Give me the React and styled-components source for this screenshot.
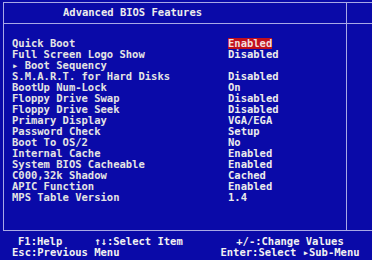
import React from 'react';
import styled, { createGlobalStyle } from 'styled-components';

const GlobalStyle = createGlobalStyle`
  html, body {
    margin: 0;
    padding: 0;
    background: #0a0aa8;
    width: 372px;
    height: 260px;
    overflow: hidden;
  }
`;

const LINE = '#a9a9e6';

const Screen = styled.div`
  width: 372px;
  height: 260px;
  background: #0a0aa8;
  color: #e6e6e6;
  font-family: "DejaVu Sans Mono", "Liberation Mono", monospace;
  font-weight: bold;
  font-size: 10.5px;
  padding-top: 2px;
  box-sizing: border-box;
  overflow: hidden;
`;

const Frame = styled.div`
  margin-left: 3px;
  border-top: 1px solid ${LINE};
  border-left: 1px solid ${LINE};
  border-bottom: 1px solid ${LINE};
  display: grid;
  grid-template-columns: 342px 1fr;
  height: 229px;
  box-sizing: border-box;
`;

const Main = styled.div`
  display: flex;
  flex-direction: column;
`;

const Side = styled.div`
  border-left: 1px solid ${LINE};
  display: flex;
  flex-direction: column;
  min-width: 0;
`;

const Header = styled.div`
  height: 21px;
  box-sizing: border-box;
  border-bottom: 1px solid ${LINE};
  padding-left: ${({ $indent }) => $indent || 0}px;
  line-height: 19px;
  color: #ececec;
  white-space: pre;
`;

const Body = styled.div`
  padding: 14px 0 0 8px;
`;

const Row = styled.div`
  display: grid;
  grid-template-columns: 216px 1fr;
  height: 11px;
  line-height: 11px;
  white-space: pre;
`;

const Label = styled.span`
  color: #e4e4e4;
`;

const Value = styled.span`
  justify-self: start;
  color: ${({ $selected }) => ($selected ? '#f4dede' : '#ececec')};
  background: ${({ $selected }) => ($selected ? '#c0101c' : 'transparent')};
`;

const Footer = styled.div`
  display: grid;
  grid-template-columns: 210px 1fr;
  padding-top: 5px;
  color: #f2f2f2;
  line-height: 11px;
  white-space: pre;
`;

const FooterLeft = styled.div`
  display: flex;
  flex-direction: column;
`;

const HintLine = styled.div`
  display: flex;
  gap: ${({ $gap }) => $gap || 0}px;
  padding-left: ${({ $indent }) => $indent}px;
`;

const FooterRight = styled.div`
  display: flex;
  flex-direction: column;
  align-items: center;
  padding-right: 2px;
`;

const items = [
  ['Quick Boot', 'Enabled', true],
  ['Full Screen Logo Show', 'Disabled'],
  ['\u25B8 Boot Sequency', ''],
  ['S.M.A.R.T. for Hard Disks', 'Disabled'],
  ['BootUp Num-Lock', 'On'],
  ['Floppy Drive Swap', 'Disabled'],
  ['Floppy Drive Seek', 'Disabled'],
  ['Primary Display', 'VGA/EGA'],
  ['Password Check', 'Setup'],
  ['Boot To OS/2', 'No'],
  ['Internal Cache', 'Enabled'],
  ['System BIOS Cacheable', 'Enabled'],
  ['C000,32k Shadow', 'Cached'],
  ['APIC Function', 'Enabled'],
  ['MPS Table Version', '1.4'],
];

export default function App() {
  return (
    <>
      <GlobalStyle />
      <Screen>
        <Frame>
          <Main>
            <Header $indent={59}>Advanced BIOS Features</Header>
            <Body>
              {items.map(([label, value, selected]) => (
                <Row key={label}>
                  <Label>{label}</Label>
                  <Value $selected={selected}>{value}</Value>
                </Row>
              ))}
            </Body>
          </Main>
          <Side>
            <Header />
          </Side>
        </Frame>
        <Footer>
          <FooterLeft>
            <HintLine $indent={18} $gap={32}>
              <span>F1:Help</span>
              <span>{'\u2191\u2193:Select Item'}</span>
            </HintLine>
            <HintLine $indent={12}>
              <span>Esc:Previous Menu</span>
            </HintLine>
          </FooterLeft>
          <FooterRight>
            <span>+/-:Change Values</span>
            <span>{'Enter:Select \u25B8Sub-Menu'}</span>
          </FooterRight>
        </Footer>
      </Screen>
    </>
  );
}
